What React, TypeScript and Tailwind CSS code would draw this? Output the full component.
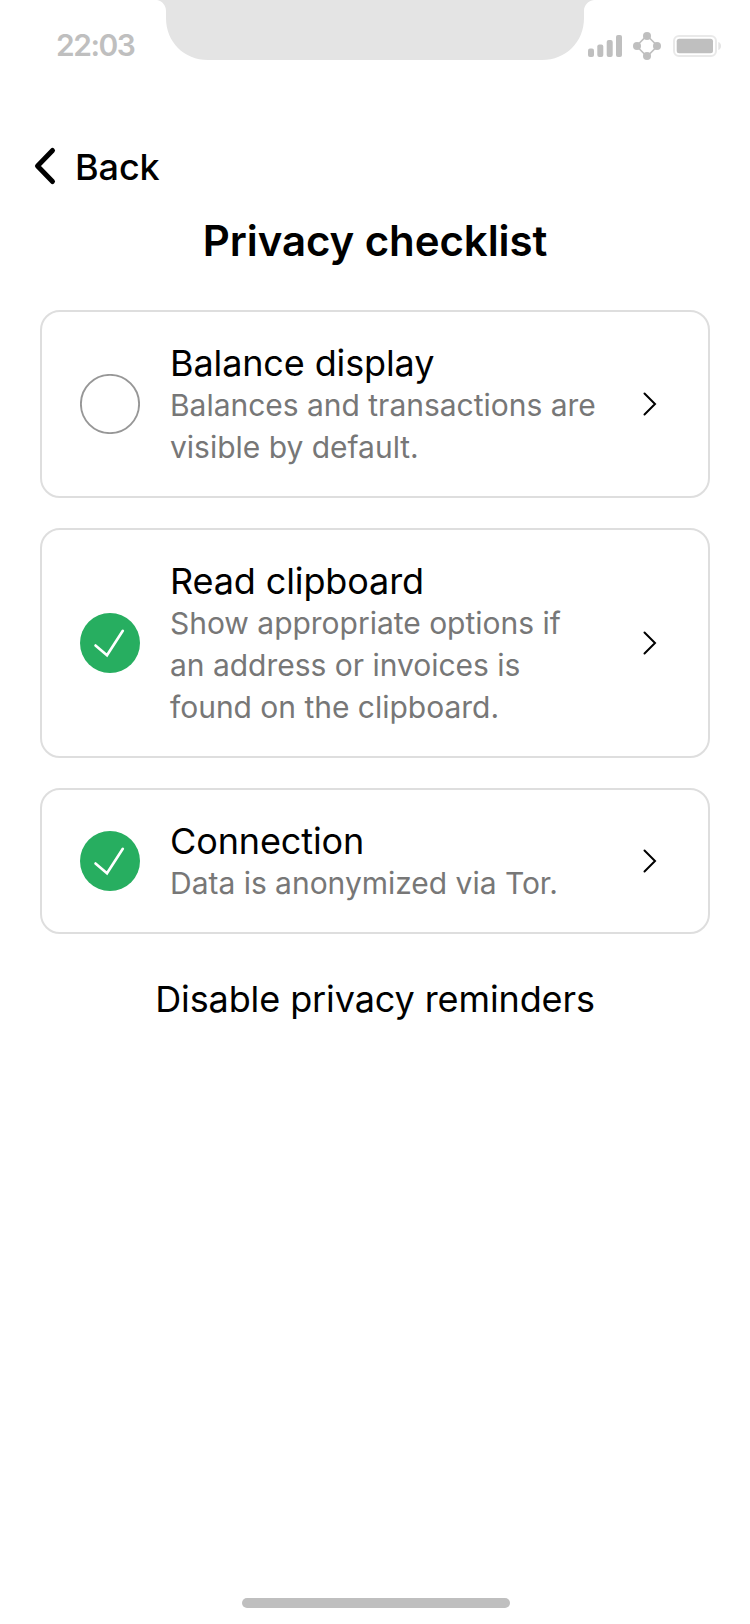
import type { ReactNode } from "react";

function StatusBar() {
  return (
    <div className="flex h-[80px] items-start text-[#bfbfbf]">
      <div className="w-[157px] shrink-0 pt-[27px] pl-[56px] text-[30px] leading-[36px] font-semibold tracking-[-1.5px]">22:03</div>
      <svg className="shrink-0" width="437" height="60" viewBox="157 0 437 60">
        <path d="M157 0C162 1 166 5 166 11V18C166 42 184 60 208 60H542C566 60 584 42 584 18V11C584 5 588 1 594 0Z" fill="#e4e4e4" />
      </svg>
      <svg className="-ml-[14px] mt-[30px] shrink-0" width="150" height="32" viewBox="580 30 150 32" fill="#bfbfbf">
        <rect x="588" y="48.5" width="6" height="8.5" rx="2" />
        <rect x="597.3" y="44.5" width="6" height="12.5" rx="2" />
        <rect x="606.7" y="40" width="6" height="17" rx="2" />
        <rect x="616" y="35" width="6" height="22" rx="2" />
        <circle cx="647" cy="36" r="4" />
        <circle cx="637" cy="46" r="4" />
        <circle cx="657" cy="46" r="4" />
        <circle cx="647" cy="56" r="4" />
        <path d="M647 35.500L657.500 46L647 56.500L636.500 46Z" fill="none" stroke="#bfbfbf" strokeWidth="1.600" />
        <rect x="674" y="36" width="42" height="20" rx="5" fill="none" stroke="#e9e9e9" strokeWidth="2" />
        <rect x="676.7" y="38.7" width="36.3" height="14.6" rx="2.5" />
        <path d="M718.3 42C720 42.6 721 44 721 46S720 49.400 718.3 50Z" fill="#e4e4e4" />
      </svg>
    </div>
  );
}

function Check({ done }: { done: boolean }) {
  return (
    <svg className="shrink-0" width="60" height="60" viewBox="0 0 60 60" fill="none">
      {done ? (
        <>
          <circle cx="30" cy="30" r="30" fill="#27ae60" />
          <path d="M15.500 32.500L27 42.300L42.800 17.800" stroke="#fff" strokeWidth="2.600" strokeLinecap="round" />
        </>
      ) : (
        <circle cx="30" cy="30" r="29.1" stroke="#979797" strokeWidth="1.900" />
      )}
    </svg>
  );
}

function Card({ title, done, children }: { title: string; done: boolean; children: ReactNode }) {
  return (
    <button className="flex w-full items-center rounded-[20px] border-2 border-[#dedede] bg-white py-[28px] pr-[50px] pl-[38px] text-left">
      <Check done={done} />
      <div className="ml-[30px] flex-1">
        <div className="pt-[2px] text-[36px] leading-[42px] tracking-[-0.12px]">{title}</div>
        <div className="text-[30px] leading-[42px] tracking-[-0.02px] whitespace-nowrap text-[#777]">{children}</div>
      </div>
      <svg className="shrink-0" width="16" height="26" viewBox="0 0 16 26" fill="none">
        <path d="M2.500 2.500L13 13L2.500 23.500" stroke="#000" strokeWidth="2" strokeLinecap="round" />
      </svg>
    </button>
  );
}

export default function App() {
  return (
    <div className="flex h-[1624px] w-[750px] flex-col bg-white font-['Inter',sans-serif] text-black">
      <StatusBar />
      <div className="mt-[56px] flex h-[60px] items-center pl-[33px]">
        <svg width="24" height="40" viewBox="0 0 24 40" fill="none">
          <path d="M19.500 4.500L4.500 20L19.500 35.500" stroke="#000" strokeWidth="5" strokeLinecap="round" strokeLinejoin="round" />
        </svg>
        <span className="ml-[18px] pt-[2px] text-[36px] leading-[44px] font-medium tracking-[-0.1px]">Back</span>
      </div>
      <h1 className="mt-[20px] text-center text-[42px] leading-[50px] font-semibold tracking-[-0.08px]">Privacy checklist</h1>
      <div className="mt-[44px] flex flex-col gap-[30px] px-[40px]">
        <Card title="Balance display" done={false}>
          Balances and transactions are<br />visible by default.
        </Card>
        <Card title="Read clipboard" done>
          Show appropriate options if<br />an address or invoices is<br />found on the clipboard.
        </Card>
        <Card title="Connection" done>
          Data is anonymized via Tor.
        </Card>
      </div>
      <button className="mt-[41px] text-center text-[36px] leading-[48px] tracking-[-0.1px]">Disable privacy reminders</button>
      <div className="mt-auto mb-[16px] ml-[242px] h-[10px] w-[268px] rounded-full bg-[#bfbfbf]" />
    </div>
  );
}
